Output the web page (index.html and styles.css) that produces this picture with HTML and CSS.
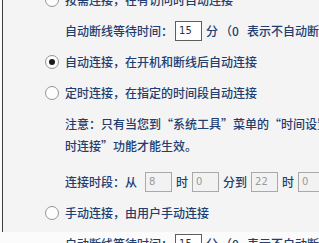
FILE: index.html
```html
<!DOCTYPE html>
<html lang="zh-CN">
<head>
<meta charset="utf-8">
<link rel="stylesheet" href="styles.css">
</head>
<body>
<div class="panel">
  <div class="opt"><span class="radio"></span><span class="label">按需连接，在有访问时自动连接</span></div>
  <div class="sub">自动断线等待时间：<span class="box">15</span><span class="unit">分</span>（0<span class="gap"></span>表示不自动断线）</div>
  <div class="opt"><span class="radio checked"></span><span class="label">自动连接，在开机和断线后自动连接</span></div>
  <div class="opt"><span class="radio"></span><span class="label">定时连接，在指定的时间段自动连接</span></div>
  <div class="note">注意：只有当您到“系统工具”菜单的“时间设置”项设置了时间后，“定<br>时连接”功能才能生效。</div>
  <div class="sub">连接时段：从<span class="box off first">8</span><span class="unit">时</span><span class="box off">0</span><span class="unit">分到</span><span class="box off">22</span><span class="unit">时</span><span class="box off">0</span><span class="unit">分</span></div>
  <div class="opt"><span class="radio"></span><span class="label">手动连接，由用户手动连接</span></div>
  <div class="sub">自动断线等待时间：<span class="box">15</span><span class="unit">分</span>（0<span class="gap"></span>表示不自动断线）</div>
</div>
</body>
</html>
```
FILE: styles.css
```css
html, body {
  margin: 0;
  padding: 0;
  width: 319px;
  height: 243px;
  overflow: hidden;
  background: #fbfbfb;
}
.panel {
  margin-left: 2px;
  border-left: 1px solid #3c3c3c;
  background: #f4f4f4;
  height: 243px;
  width: 520px;
  box-sizing: border-box;
  padding-left: 42px;
  margin-top: -11px;
  display: flex;
  flex-direction: column;
  gap: 9px;
  font-family: "Noto Sans CJK SC", sans-serif;
  font-size: 12px;
  font-weight: 500;
  line-height: 22px;
  color: #223d70;
  white-space: nowrap;
}
.opt {
  display: flex;
  align-items: center;
  height: 22px;
}
.radio {
  width: 12px;
  height: 12px;
  border: 1px solid #949494;
  border-radius: 50%;
  background: #fdfdfd;
  margin-right: 6px;
  flex: none;
  display: flex;
  align-items: center;
  justify-content: center;
}
.radio.checked::after {
  content: "";
  width: 6px;
  height: 6px;
  border-radius: 50%;
  background: #1a1a1a;
}
.sub {
  padding-left: 20px;
  display: flex;
  align-items: center;
  height: 22px;
}
.note {
  padding-left: 20px;
  margin-bottom: 5px;
}
.gap {
  display: inline-block;
  width: 8px;
}
.box {
  width: 22px;
  height: 18px;
  border: 1px solid #5e5e5e;
  background: #fff;
  font-family: "DejaVu Sans", sans-serif;
  font-weight: 400;
  font-size: 10px;
  line-height: 18px;
  color: #333;
  padding-left: 3px;
  margin: 0 2px;
}
.box.first {
  margin-left: 8px;
}
.box.off {
  border-color: #a9a9a9;
  background: #f2f2f2;
  color: #9a9a9a;
}
.unit {
  margin: 0 2px;
}
```
